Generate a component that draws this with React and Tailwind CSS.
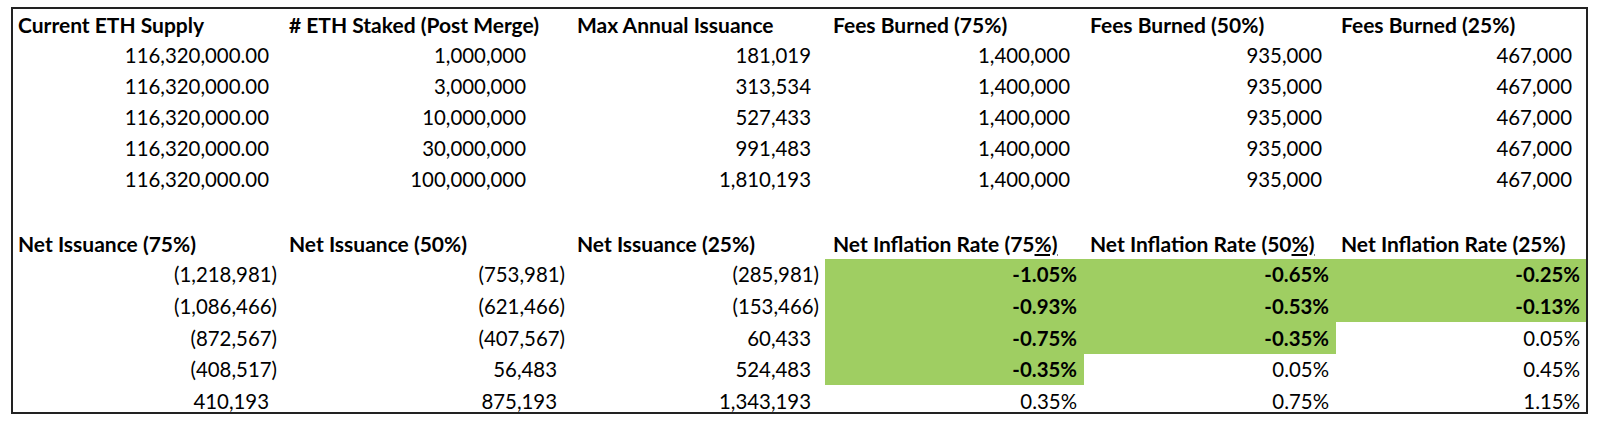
const topHeaders = [
  "Current ETH Supply",
  "# ETH Staked (Post Merge)",
  "Max Annual Issuance",
  "Fees Burned (75%)",
  "Fees Burned (50%)",
  "Fees Burned (25%)",
];

const topRows = [
  ["116,320,000.00", "1,000,000", "181,019", "1,400,000", "935,000", "467,000"],
  ["116,320,000.00", "3,000,000", "313,534", "1,400,000", "935,000", "467,000"],
  ["116,320,000.00", "10,000,000", "527,433", "1,400,000", "935,000", "467,000"],
  ["116,320,000.00", "30,000,000", "991,483", "1,400,000", "935,000", "467,000"],
  ["116,320,000.00", "100,000,000", "1,810,193", "1,400,000", "935,000", "467,000"],
];

// [value, green]
const bottomRows = [
  [["(1,218,981)"], ["(753,981)"], ["(285,981)"], ["-1.05%", true], ["-0.65%", true], ["-0.25%", true]],
  [["(1,086,466)"], ["(621,466)"], ["(153,466)"], ["-0.93%", true], ["-0.53%", true], ["-0.13%", true]],
  [["(872,567)"], ["(407,567)"], ["60,433"], ["-0.75%", true], ["-0.35%", true], ["0.05%"]],
  [["(408,517)"], ["56,483"], ["524,483"], ["-0.35%", true], ["0.05%"], ["0.45%"]],
  [["410,193"], ["875,193"], ["1,343,193"], ["0.35%"], ["0.75%"], ["1.15%"]],
];

const headerPad = ["pl-[5px]", "pl-[6px]", "pl-[6px]", "pl-[8px]", "pl-[6px]", "pl-[5px]"];

const numPad = (value, col, top) => {
  if (top && col === 1) return "pr-[45px]";
  if (value.endsWith("%")) return col === 5 ? "pr-[6px]" : "pr-[7px]";
  if (value.startsWith("(")) return "pr-[6px]";
  return "pr-[14px]";
};

const Row = ({ children, tall, spacer }) => (
  <div
    className={`grid grid-cols-[270px_288px_254px_259px_252px_250px] ${
      tall ? "h-[31.7px]" : spacer ? "h-[32.5px]" : "h-[31px]"
    }`}
  >
    {children}
  </div>
);

const Head = ({ col, children }) => (
  <div
    className={`flex items-center font-bold text-[21px] whitespace-nowrap ${headerPad[col]}`}
  >
    {children}
  </div>
);

const NumCell = ({ value, col, top, green }) => (
  <div
    className={`flex items-center justify-end whitespace-nowrap ${numPad(
      value,
      col,
      top
    )} ${green ? "bg-[#9fce62] font-bold" : ""}`}
  >
    {value}
  </div>
);

const App = () => {
  return (
    <div className="w-[1600px] h-[425px] bg-white pt-[7px] pl-[11px] font-['Lato',sans-serif] text-[20.4px] leading-none text-black">
      <div className="w-[1577px] h-[407px] border-2 border-[#222] overflow-hidden">
        <Row>
          {topHeaders.map((label, i) => (
            <Head key={i} col={i}>
              {label}
            </Head>
          ))}
        </Row>
        {topRows.map((row, r) => (
          <Row key={r}>
            {row.map((value, c) => (
              <NumCell key={c} value={value} col={c} top />
            ))}
          </Row>
        ))}
        <Row spacer />
        <Row>
          <Head col={0}>Net Issuance (75%)</Head>
          <Head col={1}>Net Issuance (50%)</Head>
          <Head col={2}>Net Issuance (25%)</Head>
          <Head col={3}>
            Net Inflation Rate (75<span className="underline underline-offset-2">%)</span>
          </Head>
          <Head col={4}>
            Net Inflation Rate (50<span className="underline underline-offset-2">%)</span>
          </Head>
          <Head col={5}>Net Inflation Rate (25%)</Head>
        </Row>
        {bottomRows.map((row, r) => (
          <Row key={r} tall>
            {row.map(([value, green], c) => (
              <NumCell key={c} value={value} col={c} green={green} />
            ))}
          </Row>
        ))}
      </div>
    </div>
  );
};

export default App;
